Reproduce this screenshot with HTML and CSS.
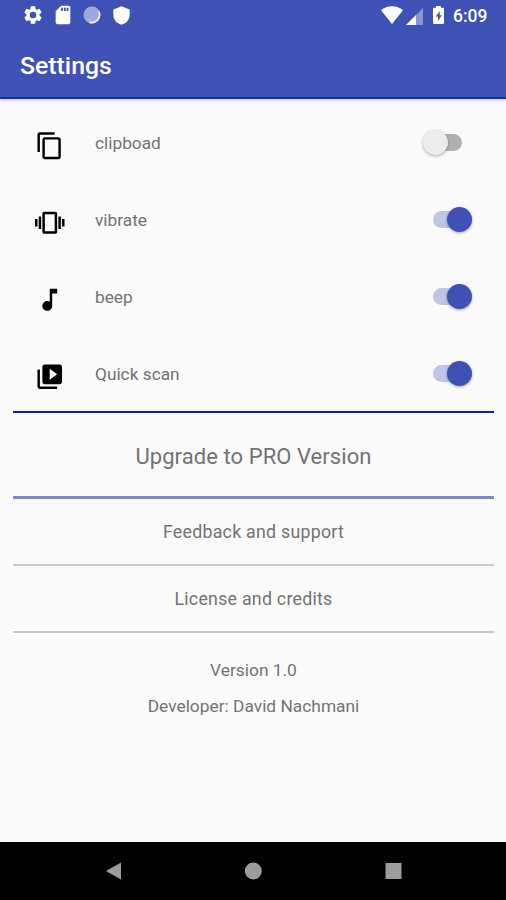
FILE: index.html
```html
<!DOCTYPE html>
<html lang="en">
<head>
	<meta charset="UTF-8">
	<title>Settings</title>
	<link rel="stylesheet" href="styles.css">
</head>
<body>
	<div id="wrapper">
		<header>
			<div class="status">
				<svg class="gear" width="22" height="22" viewBox="0 0 24 24"><path d="M19.14 12.94c.04-.3.06-.61.06-.94s-.02-.64-.07-.94l2.03-1.58a.49.49 0 0 0 .12-.61l-1.92-3.32a.49.49 0 0 0-.59-.22l-2.39.96a7 7 0 0 0-1.62-.94l-.36-2.54a.48.48 0 0 0-.48-.41h-3.84a.48.48 0 0 0-.47.41l-.36 2.54c-.59.24-1.13.57-1.62.94l-2.39-.96a.48.48 0 0 0-.59.22L2.74 8.87a.48.48 0 0 0 .12.61l2.03 1.58a6 6 0 0 0 0 1.88l-2.03 1.58a.49.49 0 0 0-.12.61l1.92 3.32c.12.22.37.29.59.22l2.39-.96c.5.38 1.03.7 1.62.94l.36 2.54c.05.24.24.41.48.41h3.84c.24 0 .44-.17.47-.41l.36-2.54a7 7 0 0 0 1.62-.94l2.39.96c.22.08.47 0 .59-.22l1.92-3.32a.48.48 0 0 0-.12-.61zM12 15.6a3.6 3.6 0 1 1 0-7.2 3.6 3.6 0 0 1 0 7.2z"/></svg>
				<svg class="card" width="22" height="22" viewBox="0 0 24 24"><path d="M18 2h-8L4.020 8 4 20c0 1.100.9 2 2 2h12c1.100 0 2-.9 2-2V4c0-1.100-.9-2-2-2zm-6 5.500h-2V4h2v3.500zm3 0h-2V4h2v3.500zm3 0h-2V4h2v3.500z"/></svg>
				<svg class="sync" width="18" height="18" viewBox="0 0 18 18"><circle cx="9" cy="9" r="8.500" fill-opacity=".5"/><path d="M15.800 5.500a7.800 7.800 0 0 1-9.500 10.700" fill="none" stroke="#fff" stroke-width="1.600" stroke-opacity=".85"/></svg>
				<svg class="shield" width="21" height="21" viewBox="0 0 24 24"><path d="M12 1.500L2.700 5v6.500c0 5.300 4 9.900 9.300 11 5.300-1.100 9.300-5.700 9.300-11V5z"/></svg>
				<span class="space"></span>
				<svg class="wifi" width="22" height="18" viewBox="0 0 22 18"><path d="M11 18L0 4.300C3 1.800 7 .3 11 .3s8 1.500 11 4z"/></svg>
				<svg class="signal" width="17" height="17" viewBox="0 0 17 17"><path d="M0 17L17 0v17z" fill-opacity=".4"/><path d="M0 17L10 7v10z"/></svg>
				<svg class="battery" width="11" height="18" viewBox="0 0 11 18"><path fill-rule="evenodd" d="M3 0h5v1.800h2q1 0 1 1V17q0 1-1 1H1q-1 0-1-1V2.800q0-1 1-1h2zM6.700 5L2.800 10.600h2.300V15l3.600-5.700H6.700z"/></svg>
				<span class="time">6:09</span>
			</div>
			<h1>Settings</h1>
		</header>

		<main>
			<div class="row">
				<svg class="icon" viewBox="0 0 24 24"><path d="M16 1H4c-1.100 0-2 .9-2 2v14h2V3h12V1zm3 4H8c-1.100 0-2 .9-2 2v14c0 1.100.9 2 2 2h11c1.100 0 2-.9 2-2V7c0-1.100-.9-2-2-2zm0 16H8V7h11v14z"/></svg>
				<span class="label">clipboad</span>
				<span class="switch off"></span>
			</div>
			<div class="row">
				<svg class="icon" viewBox="0 0 24 24"><path d="M0 15h2V9H0v6zm3 2h2V7H3v10zm19-8v6h2V9h-2zm-3 8h2V7h-2v10zM16.500 3h-9C6.670 3 6 3.670 6 4.500v15c0 .83.67 1.500 1.500 1.500h9c.83 0 1.500-.67 1.500-1.500v-15c0-.83-.67-1.500-1.500-1.500zM16 19H8V5h8v14z"/></svg>
				<span class="label">vibrate</span>
				<span class="switch"></span>
			</div>
			<div class="row">
				<svg class="icon" viewBox="0 0 24 24"><path d="M12 3v10.550c-.59-.34-1.270-.55-2-.55-2.210 0-4 1.790-4 4s1.790 4 4 4 4-1.790 4-4V7h4V3h-6z"/></svg>
				<span class="label">beep</span>
				<span class="switch"></span>
			</div>
			<div class="row">
				<svg class="icon" viewBox="0 0 24 24"><path d="M4 6H2v14c0 1.100.9 2 2 2h14v-2H4V6zm16-4H8c-1.100 0-2 .9-2 2v12c0 1.100.9 2 2 2h12c1.100 0 2-.9 2-2V4c0-1.100-.9-2-2-2zm-8 12.500v-9l6 4.500-6 4.500z"/></svg>
				<span class="label">Quick scan</span>
				<span class="switch"></span>
			</div>

			<div class="upgrade"><span>Upgrade to PRO Version</span></div>
			<div class="link feedback"><span>Feedback and support</span></div>
			<div class="link license"><span>License and credits</span></div>
			<p class="version">Version 1.0</p>
			<p class="developer">Developer: David Nachmani</p>
		</main>

		<nav>
			<svg width="18" height="18" viewBox="0 0 18 18"><path d="M2 9L17 .5v17z"/></svg>
			<svg width="18" height="18" viewBox="0 0 18 18"><circle cx="9.300" cy="9" r="8.500"/></svg>
			<svg width="18" height="18" viewBox="0 0 18 18"><path d="M1.500 1h16v16h-16z"/></svg>
		</nav>
	</div>
</body>
</html>
```

FILE: styles.css
```css
body {
	margin: 0;
	background-color: #fafafa;
	font-family: Roboto, sans-serif;
	color: #737373;
}
#wrapper {
	display: flex;
	flex-direction: column;
	width: 506px;
	height: 900px;
	overflow: hidden;
}
svg {
	display: block;
	flex: none;
}

/* header */
header {
	box-sizing: border-box;
	height: 99px;
	flex: none;
	background-color: #3f51b5;
	border-bottom: 2px solid #1233a8;
	box-shadow: 0 1px 3px rgba(0, 0, 0, 0.25);
	color: #fff;
}
.status {
	display: flex;
	align-items: center;
	height: 30px;
	padding: 0 18px 0 21.5px;
	fill: #fff;
}
.card {
	margin-left: 8px;
}
.sync {
	margin-left: 9px;
}
.shield {
	margin-left: 10px;
}
.space {
	flex: 1;
}
.signal {
	margin: 2px 0 0 3px;
}
.battery {
	margin-left: 10px;
}
.time {
	margin: 2px 0 0 9px;
	width: 35px;
	font-size: 17.5px;
	font-weight: 500;
	white-space: nowrap;
}
h1 {
	margin: 0;
	padding: 20px 0 0 20px;
	font-size: 24.8px;
	line-height: 32px;
	font-weight: 500;
}

/* option rows */
main {
	flex: 1;
	padding: 5px 12px 0 13px;
}
.row {
	display: flex;
	align-items: center;
	height: 77px;
	padding: 0 22px;
}
.icon {
	width: 29.5px;
	height: 29.5px;
	margin-top: 6px;
	fill: #000;
}
.label {
	flex: 1;
	margin-left: 30.5px;
	font-size: 17.3px;
}
.switch {
	position: relative;
	width: 34px;
	height: 17px;
	margin-right: 5px;
	border-radius: 9px;
	background-color: #c0c5e5;
}
.switch::after {
	content: "";
	position: absolute;
	top: -4px;
	right: -5px;
	width: 25px;
	height: 25px;
	border-radius: 50%;
	background-color: #3f51b5;
	box-shadow: 0 1px 3px rgba(0, 0, 0, 0.35);
}
.switch.off {
	margin-right: 10px;
	background-color: #b0b0b0;
}
.switch.off::after {
	right: auto;
	left: -5px;
	background-color: #ececec;
}

/* links */
.upgrade,
.link {
	display: flex;
	align-items: center;
	justify-content: center;
	box-sizing: border-box;
}
.upgrade {
	height: 88px;
	margin-top: -1px;
	padding-top: 4px;
	border-top: 2px solid #1c1c9c;
	border-bottom: 3px solid #8388c9;
	font-size: 22px;
	letter-spacing: 0.07px;
}
.link {
	padding-bottom: 1px;
	border-bottom: 2px solid #c8c8c8;
	font-size: 17.8px;
	letter-spacing: 0.25px;
}
.feedback {
	height: 67px;
}
.license {
	height: 67px;
}
.version,
.developer {
	margin: 0;
	text-align: center;
	font-size: 17.35px;
	line-height: 36px;
}
.version {
	margin-top: 19px;
}

/* navigation buttons */
nav {
	display: flex;
	align-items: center;
	justify-content: space-between;
	box-sizing: border-box;
	height: 58px;
	flex: none;
	padding: 0 104px;
	background-color: #000;
	fill: #9c9c9c;
}
```
